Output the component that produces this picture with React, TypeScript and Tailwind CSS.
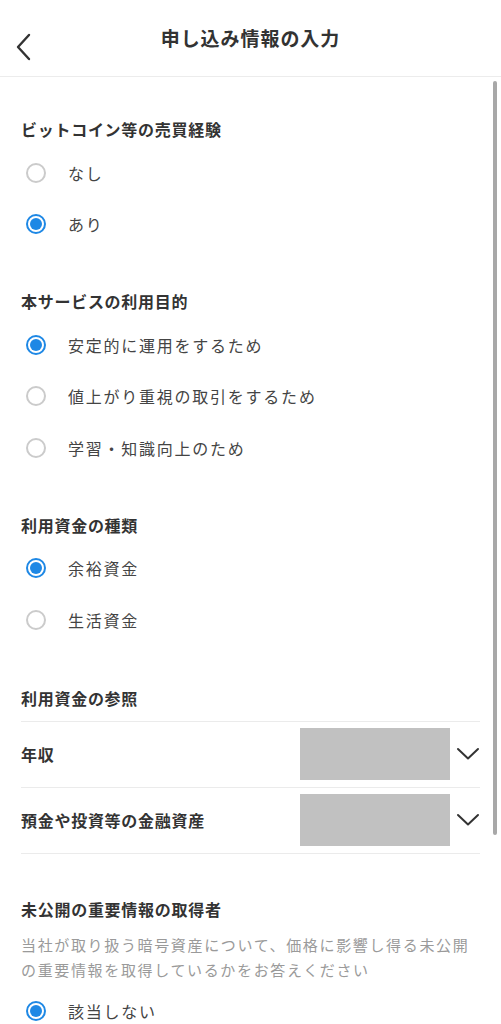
import React from "react";

const FONT = { fontFamily: '"Noto Sans CJK JP", "Noto Sans", sans-serif' };

function Radio({ checked }: { checked?: boolean }) {
  return checked ? (
    <span className="ml-[5px] flex h-[20px] w-[20px] shrink-0 items-center justify-center rounded-full border-2 border-[#1e88e5]">
      <span className="h-[12px] w-[12px] rounded-full bg-[#1e88e5]" />
    </span>
  ) : (
    <span className="ml-[5px] h-[20px] w-[20px] shrink-0 rounded-full border-2 border-[#cbcbcb]" />
  );
}

function Option({ label, checked }: { label: string; checked?: boolean }) {
  return (
    <div className="flex h-[51.5px] items-center gap-[22px]">
      <Radio checked={checked} />
      <span className="text-[16px] leading-[24px] tracking-[0.11em] text-[#444]">{label}</span>
    </div>
  );
}

function Heading({ children }: { children: React.ReactNode }) {
  return (
    <div className="text-[16px] font-bold leading-[24px] tracking-[0.045em] text-[#333]">{children}</div>
  );
}

function Chevron() {
  return (
    <svg width="24" height="14" viewBox="0 0 24 14" className="shrink-0">
      <path d="M2 2 L12 11.5 L22 2" fill="none" stroke="#333" strokeWidth="2" strokeLinecap="round" strokeLinejoin="round" />
    </svg>
  );
}

function SelectRow({ label }: { label: string }) {
  return (
    <div className="flex h-[66px] items-center border-b border-[#ebebeb]">
      <span className="flex-1 text-[16px] font-bold leading-[24px] tracking-[0.045em] text-[#333]">{label}</span>
      <div className="h-[52px] w-[150px] bg-[#c1c1c1]" />
      <div className="ml-[6px] flex w-[24px] justify-center">
        <Chevron />
      </div>
    </div>
  );
}

export default function App() {
  return (
    <div className="relative h-[1024px] w-full overflow-hidden bg-white" style={FONT}>
      {/* header */}
      <div className="relative flex h-[77px] items-center justify-center border-b border-[#ececec]">
        <svg
          width="18"
          height="28"
          viewBox="0 0 18 28"
          className="absolute left-[15px] top-[33px]"
        >
          <path d="M14 2 L3 14 L14 26" fill="none" stroke="#333" strokeWidth="2.4" strokeLinecap="round" strokeLinejoin="round" />
        </svg>
        <span className="text-[19px] font-bold tracking-[0.05em] text-[#333]">申し込み情報の入力</span>
      </div>

      {/* scroll indicator */}
      <div className="absolute left-[493px] top-[81px] h-[754px] w-[4px] rounded-full bg-[#a8a8a8]" />

      <div className="px-[21px] pt-[40px]">
        <section>
          <Heading>ビットコイン等の売買経験</Heading>
          <div className="mt-[6px]">
            <Option label="なし" />
            <Option label="あり" checked />
          </div>
        </section>

        <section className="mt-[39px]">
          <Heading>本サービスの利用目的</Heading>
          <div className="mt-[6px]">
            <Option label="安定的に運用をするため" checked />
            <Option label="値上がり重視の取引をするため" />
            <Option label="学習・知識向上のため" />
          </div>
        </section>

        <section className="mt-[39px]">
          <Heading>利用資金の種類</Heading>
          <div className="mt-[6px]">
            <Option label="余裕資金" checked />
            <Option label="生活資金" />
          </div>
        </section>

        <section className="mt-[40px]">
          <Heading>利用資金の参照</Heading>
          <div className="mt-[11px] border-t border-[#ebebeb]">
            <SelectRow label="年収" />
            <SelectRow label="預金や投資等の金融資産" />
          </div>
        </section>

        <section className="mt-[43px]">
          <Heading>未公開の重要情報の取得者</Heading>
          <p className="mt-[11px] text-[15px] leading-[25px] tracking-[0.11em] text-[#9a9a9a]">
            当社が取り扱う暗号資産について、価格に影響し得る未公開の重要情報を取得しているかをお答えください
          </p>
          <div className="mt-[4px]">
            <Option label="該当しない" checked />
          </div>
        </section>
      </div>
    </div>
  );
}
